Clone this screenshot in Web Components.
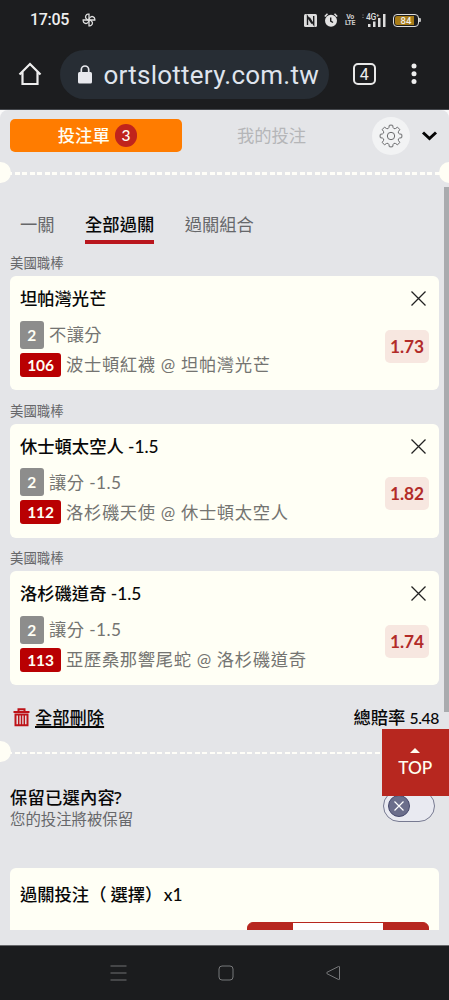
<!DOCTYPE html>
<html lang="zh-Hant">
<head>
<meta charset="utf-8">
<title>投注單</title>
<style>
html,body{margin:0;height:100%;overflow:hidden;background:#1c1d1f}
body{font-family:Lato,"Noto Sans CJK TC",sans-serif;font-size:17.3px;color:#080808}
</style>
</head>
<body>
<phone-screen></phone-screen>
<script>
const define=(name,html,setup)=>{
  const t=document.createElement('template');t.innerHTML=html;
  customElements.define(name,class extends HTMLElement{
    constructor(){super();this.attachShadow({mode:'open'}).append(t.content.cloneNode(true));}
    connectedCallback(){if(setup)setup(this,this.shadowRoot);}
  });
};

define('status-bar',`<style>
:host{display:flex;height:40px;box-sizing:border-box;padding:0 28px 0 30px;align-items:center;color:#eee;font-family:Roboto,sans-serif}
.time{font-size:16px;line-height:20px;letter-spacing:-.3px;width:52px;font-weight:500}
.right{margin-left:auto;display:flex;align-items:center}
svg{display:block}
.vo{font:bold 7px/6.5px Roboto,sans-serif;text-align:center;margin-left:7px;width:10px;letter-spacing:-.4px;color:#ccc}
.sig{margin-left:7px}
.bat{margin-left:7px;border:1px solid #ddd;border-radius:4px;display:flex;align-items:center;justify-content:center;background:linear-gradient(90deg,#a87c17 0 85%,#1c1d1f 85%) content-box;padding:1px;box-sizing:border-box;font:500 9.5px/9px Roboto,sans-serif;width:26px;height:13px}
.cap{width:2px;height:4px;background:#bbb;border-radius:0 1px 1px 0}
</style>
<span class="time">17:05</span>
<svg width="14" height="14" viewBox="0 0 14 14" fill="none" stroke="#ddd" stroke-width="1.3"><path d="M7 7V1.200H6A2.700 2.700 0 0 0 4 5.400C4.700 6.500 6 7 7 7"/><path d="M7 7V1.200H6A2.700 2.700 0 0 0 4 5.400C4.700 6.500 6 7 7 7" transform="rotate(90 7 7)"/><path d="M7 7V1.200H6A2.700 2.700 0 0 0 4 5.400C4.700 6.500 6 7 7 7" transform="rotate(180 7 7)"/><path d="M7 7V1.200H6A2.700 2.700 0 0 0 4 5.400C4.700 6.500 6 7 7 7" transform="rotate(270 7 7)"/></svg>
<div class="right">
<svg width="13" height="13" viewBox="0 0 13 13"><rect width="13" height="13" rx="1.500" fill="#ddd"/><path d="M3.500 11V2.500L8 9.500M9.700 2v8.500L5.300 3.500" fill="none" stroke="#1c1d1f" stroke-width="1.400"/></svg>
<svg style="margin-left:7px" width="14" height="14" viewBox="0 0 14 14"><circle cx="7" cy="7.700" r="6" fill="#e2e2e2"/><path d="M.8 3.500 3.500.8M10.500.8l2.700 2.700" stroke="#e2e2e2" stroke-width="1.500"/><path d="M6.700 4.500V8l2.300 1.500" fill="none" stroke="#1c1d1f" stroke-width="1.400"/></svg>
<div class="vo">Vo<br>LTE</div>
<svg class="sig" width="24" height="15" viewBox="0 0 24 15"><path d="M0 2h2M0 4.500h2" stroke="#555"/><g fill="#ddd"><rect x="6" y="11" width="2.500" height="3"/><rect x="11" y="8.500" width="2.500" height="5.500"/><rect x="16" y="5" width="2.500" height="9"/><rect x="21" y="1" width="2.500" height="13"/><text x="4" y="7" font-family="Roboto" font-weight="500" font-size="8.500" letter-spacing="-.3">4G⁺</text></g></svg>
<div class="bat">84</div><i class="cap"></i>
</div>`);

define('browser-bar',`<style>
:host{display:flex;height:70px;align-items:center;box-sizing:border-box;padding:0 22px 1px 18px;border-bottom:1px solid #44474c}
svg{display:block;flex:none}
.pill{margin-left:18px;width:269px;height:49px;border-radius:25px;background:#272d34;display:flex;align-items:center;box-sizing:border-box;padding-left:18px;flex:none}
.url{margin-left:12px;width:215px;height:34px;overflow:hidden;display:flex;justify-content:flex-end;font:26px/36px Roboto,"Noto Sans",sans-serif;color:#dfe4ed;letter-spacing:.24px}
.tabs{margin-left:24px;width:22.500px;height:22.500px;box-sizing:border-box;border:2px solid #e8e8e8;border-radius:5px;color:#eee;font:400 16px/19px Roboto,sans-serif;text-align:center}
.dots{margin-left:35px}
</style>
<svg width="24" height="24" viewBox="0 0 24 24" fill="none" stroke="#eee" stroke-width="2.200"><path d="M1.500 12.500 12 2l10.500 10.500M4.500 10v12h15V10"/></svg>
<div class="pill"><svg width="14" height="19" viewBox="0 0 14 19"><rect y="7" width="14" height="11.500" rx="1.500" fill="#e8e9ee"/><path d="M3.300 8V4.700a3.700 3.700 0 0 1 7.400 0V8" fill="none" stroke="#e8e9ee" stroke-width="1.700"/></svg><div class="url"><span>ortslottery.com.tw</span></div></div>
<div class="tabs">4</div>
<svg class="dots" width="6" height="22" viewBox="0 0 6 22" fill="#eee"><circle cx="3" cy="3" r="2.500"/><circle cx="3" cy="10.700" r="2.500"/><circle cx="3" cy="18.400" r="2.500"/></svg>`);

define('slip-header',`<style>
:host{display:flex;height:51px;box-sizing:border-box;padding:0 11px 0 10px;align-items:center}
.on{width:172px;height:33px;border-radius:5px;background:#ff7c00;color:#fffef2;display:flex;align-items:center;justify-content:center;gap:5px;font-weight:500;line-height:33px;box-sizing:border-box;padding-left:3px}
.n{width:22.500px;height:22.500px;border-radius:50%;background:#c0241c;font:500 15.500px/22.500px Lato,sans-serif;text-align:center}
.off{width:179px;text-align:center;color:#b5b6b8;line-height:33px}
.gear{width:38px;height:38px;border-radius:50%;background:#f2f3f4;margin-left:11px;display:grid;place-items:center}
.chev{margin-left:auto;margin-top:1px}
</style>
<div class="on"><span>投注單</span><span class="n">3</span></div><div class="off">我的投注</div>
<div class="gear"><svg width="24" height="24" viewBox="-12 -12 24 24" fill="none" stroke="#68696b" stroke-width="1"><circle r="3.700"/><path id="g"/></svg></div>
<svg class="chev" width="17" height="12" viewBox="0 0 17 12" fill="none" stroke="#050505" stroke-width="3"><path d="m2 2.500 6.500 6 6.500-6"/></svg>`,(h,r)=>{
  let d='';
  for(let i=0;i<8;i++){
    const p=(radius,deg)=>{const a=(deg+i*45-90)*Math.PI/180;return (radius*Math.cos(a)).toFixed(2)+' '+(radius*Math.sin(a)).toFixed(2)};
    d+=(i?'L':'M')+p(8.7,-14)+'L'+p(10.8,-9)+'Q'+p(11.2,0)+' '+p(10.8,9)+'L'+p(8.7,14)+'Q'+p(7.2,22.5)+' '+p(8.7,31);
  }
  r.querySelector('#g').setAttribute('d',d+'Z');
});

define('ticket-divider',`<style>
:host{display:flex;height:22px;align-items:center;justify-content:space-between;overflow:hidden}
i{width:21px;height:21px;border-radius:50%;background:#fffef5;flex:none;margin:0 -10.500px;position:relative}
b{flex:1;height:2.600px;margin-top:3px;background:repeating-linear-gradient(90deg,#fffef8 0 5px,transparent 5px 7.500px)}
</style><i></i><b></b><i></i>`);

define('parlay-tabs',`<style>
:host{display:flex;gap:30.500px;padding:28.500px 20px 0;height:32px;line-height:26px;color:#66676a}
.a{color:#080808;font-weight:500;border-bottom:4px solid #b9161d;height:28.500px}
</style><span>一關</span><span class="a">全部過關</span><span>過關組合</span>`);

define('bet-card',`<style>
:host{display:block;margin:0 10px;height:147.300px}
.league{font-size:13.400px;line-height:20px;height:23.200px;color:#66676a}
.card{height:114px;box-sizing:border-box;background:#fffff5;border-radius:6px;padding:10px 10px 0;display:grid;grid-template-columns:1fr auto;grid-template-rows:26px 79px}
.title{font-weight:500;line-height:26px}
.x{justify-self:end;margin:5px 3px 0 0}
.line{display:flex;align-items:center;gap:5.500px;color:#747471;height:28px;white-space:nowrap}
.rows{padding-top:8.500px;letter-spacing:.66px}
.txt{position:relative;top:-1px}
.line:first-child{letter-spacing:.4px}
.line+.line{height:24px;margin-top:4px}
.line+.line .txt{left:-.5px}
.b{color:#fffff5;font-weight:700;font-size:15.500px;text-align:center;border-radius:3px;flex:none;letter-spacing:-.1px}
.k{width:23.500px;height:28px;line-height:29px;background:#8d8d8c}
.c{width:41px;height:24px;line-height:25px;background:#b90002}
.odds{margin-top:17.500px;width:44px;height:33px;border-radius:5px;background:#f7e7e0;color:#b22b28;font-weight:700;font-size:17.300px;line-height:33px;text-align:center}
</style><div class="league"><slot name="league"></slot></div>
<div class="card"><div class="title"><slot></slot></div>
<svg class="x" width="15" height="15" viewBox="0 0 15 15" fill="none" stroke="#222" stroke-width="1.300"><path d="m.5.5 14 14m0-14-14 14"/></svg>
<div class="rows"><div class="line"><span class="b k">2</span><span class="txt"><slot name="type"></slot></span></div><div class="line"><span class="b c"><slot name="code"></slot></span><span class="txt"><slot name="match"></slot></span></div></div>
<div class="odds"><slot name="odds"></slot></div></div>`);

define('slip-total',`<style>
:host{display:flex;height:30px;padding:0 10px 0 13px;align-items:center;font-weight:500;line-height:26px}
.del{margin-left:5px;text-decoration:underline;text-decoration-thickness:1.500px;text-underline-offset:2px}
.sum{margin-left:auto;white-space:nowrap}.sum b{font-weight:500;font-size:15.700px;letter-spacing:-.4px}
</style><svg width="17" height="19" viewBox="0 0 17 19" fill="none" stroke="#bd1318"><path d="M.5 4h16M5.500 3.500V1.200h6v2.300" stroke-width="2"/><path d="M2.500 6.500v10.700h12V6.500z" stroke-width="2"/><path d="M5.700 7v10M8.500 7v10M11.300 7v10" stroke-width="1.500"/></svg><span class="del">全部刪除</span><span class="sum">總賠率 <b>5.48</b></span>`);

define('keep-row',`<style>
:host{display:flex;justify-content:space-between;padding:24px 14px 0 10px;height:82px}
.q{font-weight:500;line-height:24px;letter-spacing:.2px}.s{font-size:15.400px;line-height:19px;color:#67686b}
.q b{font-family:"Noto Sans";font-weight:500;font-size:17px;line-height:20px;margin-left:-1px}
.tg{margin-top:4px;width:52px;height:32px;box-sizing:border-box;border:1px solid #777a91;border-radius:16px;background:#e9eaf1;padding:4px}
.kn{width:22px;height:22px;border-radius:50%;background:#6b6e8b;border:1px solid #45486c;box-sizing:border-box;display:grid;place-items:center}
</style><div><div class="q">保留已選內容<b>?</b></div><div class="s">您的投注將被保留</div></div>
<div class="tg"><div class="kn"><svg width="10" height="10" viewBox="0 0 10 10" stroke="#fff" stroke-width="1.200"><path d="m.5.5 9 9m0-9-9 9"/></svg></div></div>`);

define('stake-card',`<style>
:host{display:block;margin:0 10px;height:61.500px;overflow:hidden;border-radius:6px 6px 0 0;background:#fffff5}
.t{padding:13.500px 10px 0;line-height:26px;font-weight:500;height:40px;white-space:pre}
.o{letter-spacing:4px}.c{letter-spacing:1.500px}
.st{margin-left:237px;width:182px;height:40px;box-sizing:border-box;border:1px solid #b7271f;border-radius:6px;background:#b7271f;display:flex;justify-content:center}
.st i{width:90px;background:#fff}
</style><div class="t">過關投注<span class="o">（</span>選擇<span class="c">）</span>x1</div><div class="st"><i></i></div>`);

define('top-button',`<style>
:host{display:flex;flex-direction:column;align-items:center;width:67.500px;height:67px;background:#b7271f;color:#fffef0;font-size:17.300px;line-height:22px;box-sizing:border-box;padding-top:19px;gap:3.500px;font-weight:500}
</style><svg width="10" height="5" viewBox="0 0 10 5"><path d="M0 5 5 0l5 5z" fill="#fffef0"/></svg><span>TOP</span>`);

define('nav-bar',`<style>
:host{display:flex;height:55px;align-items:center;justify-content:center;gap:91px;background:#1b1c1e;box-sizing:border-box;border-top:1px solid #66676a;padding-left:1px}
svg{display:block}
</style><svg width="17" height="16" viewBox="0 0 17 16" stroke="#707173"><path d="M.5 1h16M.5 8h16M.5 15h16"/></svg>
<svg width="16" height="16" viewBox="0 0 16 16" fill="none" stroke="#77787a"><rect x="1" y="1" width="14" height="14" rx="3"/></svg>
<svg width="16" height="16" viewBox="0 0 16 16" fill="none" stroke="#77787a"><path d="M14.500 2v12q0 1-1 .5L2 8.700q-1-.7 0-1.400l11.500-5.800q1-.5 1 .5z"/></svg>`);

define('phone-screen',`<style>
:host{display:flex;flex-direction:column;width:449px;height:1000px;overflow:hidden;background:#1c1d1f}
.back{background:#fafafa;height:835px;flex:none}
main{position:relative;height:835px;background:#e4e5e8;border-radius:8px 8px 0 0;overflow:hidden}
.scroll{position:absolute;right:0;top:77px;width:5px;height:525px;background:#a9abae}
top-button{position:absolute;right:0;top:619px}
</style><status-bar></status-bar><browser-bar></browser-bar>
<div class="back"><main><slip-header></slip-header><ticket-divider></ticket-divider><parlay-tabs></parlay-tabs>
<div style="height:9.800px"></div>
<bet-card><span slot="league">美國職棒</span>坦帕灣光芒<span slot="type">不讓分</span><span slot="code">106</span><span slot="match">波士頓紅襪 @ 坦帕灣光芒</span><span slot="odds">1.73</span></bet-card>
<bet-card><span slot="league">美國職棒</span>休士頓太空人 -1.5<span slot="type">讓分 -1.5</span><span slot="code">112</span><span slot="match">洛杉磯天使 @ 休士頓太空人</span><span slot="odds">1.82</span></bet-card>
<bet-card><span slot="league">美國職棒</span>洛杉磯道奇 -1.5<span slot="type">讓分 -1.5</span><span slot="code">113</span><span slot="match">亞歷桑那響尾蛇 @ 洛杉磯道奇</span><span slot="odds">1.74</span></bet-card>
<div style="height:7.700px"></div>
<slip-total></slip-total><div style="height:7.500px"></div><ticket-divider></ticket-divider><keep-row></keep-row><stake-card></stake-card>
<div class="scroll"></div><top-button></top-button></main></div>
<nav-bar></nav-bar>`);
</script>
</body>
</html>
